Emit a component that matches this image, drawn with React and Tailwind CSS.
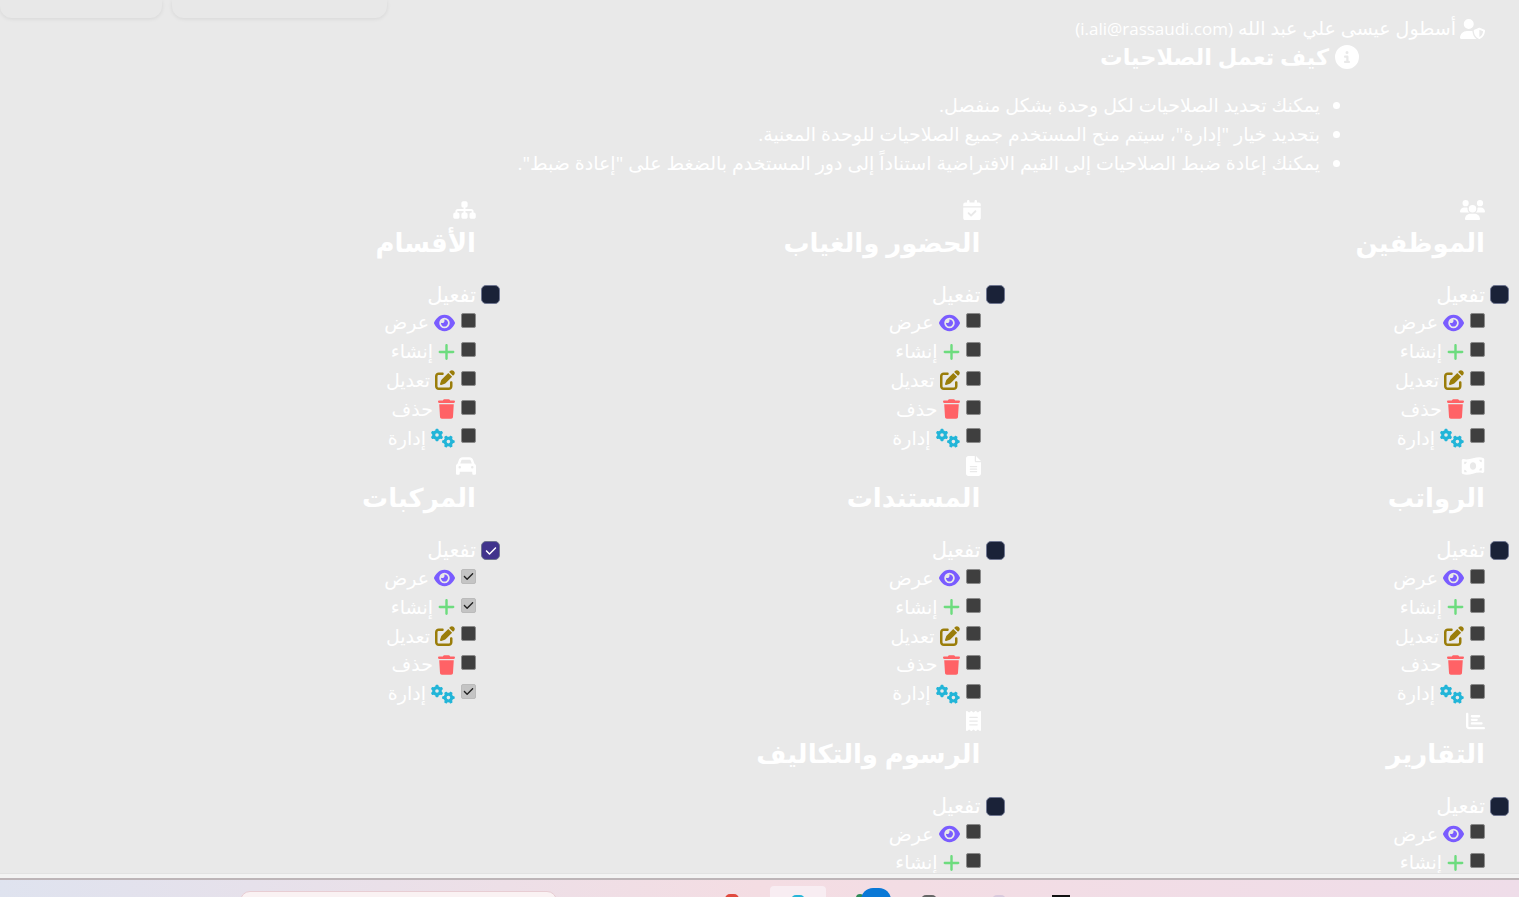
import React from 'react';
import { FaUserShield, FaCircleInfo, FaUsers, FaCalendarCheck, FaSitemap, FaMoneyBillWave, FaFileLines, FaCar, FaChartBar, FaReceipt, FaEye, FaPlus, FaPenToSquare, FaTrash, FaGears, FaCheck } from 'react-icons/fa6';

// last row runs off the bottom of the page, only two permissions are in view
const modules = [
  { name: 'الموظفين', Icon: FaUsers, size: 'w-[25px]' },
  { name: 'الحضور والغياب', Icon: FaCalendarCheck, size: 'w-[18px]' },
  { name: 'الأقسام', Icon: FaSitemap, size: 'w-[23px]' },
  { name: 'الرواتب', Icon: FaMoneyBillWave, size: 'w-[24px]' },
  { name: 'المستندات', Icon: FaFileLines, size: 'w-[15px]' },
  { name: 'المركبات', Icon: FaCar, size: 'w-[20px]', enabled: true, checked: ['view', 'create', 'manage'] },
  { name: 'التقارير', Icon: FaChartBar, size: 'w-[19px]', limit: 2 },
  { name: 'الرسوم والتكاليف', Icon: FaReceipt, size: 'w-[15px]', limit: 2 },
];

const perms = [
  { key: 'view', label: 'عرض', Icon: FaEye, size: 'w-[21px]', color: 'text-[#7a5cff]' },
  { key: 'create', label: 'إنشاء', Icon: FaPlus, size: 'w-[17px]', color: 'text-[#6ddc7e]' },
  { key: 'edit', label: 'تعديل', Icon: FaPenToSquare, size: 'w-[20px]', color: 'text-[#9a7d0a]' },
  { key: 'delete', label: 'حذف', Icon: FaTrash, size: 'w-[17px]', color: 'text-[#ff6266]' },
  { key: 'manage', label: 'إدارة', Icon: FaGears, size: 'w-[24px]', color: 'text-[#22b5d8]' },
];

const notes = [
  'يمكنك تحديد الصلاحيات لكل وحدة بشكل منفصل.',
  'بتحديد خيار "إدارة"، سيتم منح المستخدم جميع الصلاحيات للوحدة المعنية.',
  'يمكنك إعادة ضبط الصلاحيات إلى القيم الافتراضية استناداً إلى دور المستخدم بالضغط على "إعادة ضبط".',
];

const PermRow = ({ perm, checked }) => (
  <div className="flex h-[28.8px] items-center">
    <span className={`flex h-[15px] w-[15px] -translate-y-[2px] items-center justify-center rounded-[2px] border ${checked ? 'border-[#bbbbbb] bg-[#c4c4c4]' : 'border-[#8a8a8a] bg-[#3f3f3f]'}`}>
      {checked && <FaCheck className="h-[11px] w-[11px] text-[#222]" />}
    </span>
    <perm.Icon className={`mr-[6px] h-[20px] ${perm.size} ${perm.color}`} />
    <span className="mr-[5px]">{perm.label}</span>
  </div>
);

const ModuleCard = ({ mod }) => (
  <div>
    <div className="flex h-[28.8px] items-center">
      <mod.Icon className={`h-[20px] -translate-y-[1px] text-white ${mod.size}`} />
    </div>
    <h3 className="mb-[24px] h-[30px] translate-y-[1px] text-[26px] leading-[30px] font-bold text-white">{mod.name}</h3>
    <div className="flex h-[28.8px] items-center">
      <span className={`-mr-[24px] flex h-[19px] w-[19px] translate-y-[1px] items-center justify-center rounded-[5px] border border-[#6f7690] ${mod.enabled ? 'bg-[#40348c]' : 'bg-[#1a2238]'}`}>
        {mod.enabled && <FaCheck className="h-[12px] w-[12px] text-white" />}
      </span>
      <span className="mr-[5px] text-[21px]">تفعيل</span>
    </div>
    {perms.slice(0, mod.limit ?? perms.length).map((perm) => (
      <PermRow key={perm.key} perm={perm} checked={mod.checked?.includes(perm.key)} />
    ))}
  </div>
);

const App = () => {
  return (
    <div className="flex h-[897px] flex-col overflow-hidden bg-[#e9e9e9] font-['Open_Sans','DejaVu_Sans',sans-serif]">
      <div className="min-h-0 flex-1">
        {/* bottom of the cards scrolled off the top */}
        <div className="flex h-[18px] gap-[10px]">
          <div className="w-[162px] rounded-b-[12px] bg-[#e8e8e8] shadow-[0_1px_4px_rgba(0,0,0,0.08)]" />
          <div className="w-[215px] rounded-b-[12px] bg-[#e8e8e8] shadow-[0_1px_4px_rgba(0,0,0,0.08)]" />
        </div>

        <div dir="rtl" className="pr-[34px] text-[19px] leading-[28.8px] text-white">
          <div className="flex h-[25.4px] flex-col justify-end">
            <div className="flex h-[28.8px] shrink-0 items-center gap-[4px]">
              <FaUserShield className="h-[20px] w-[25px] text-white" />
              <span>
                أسطول عيسى علي عبد الله <span className="text-[17px]">(i.ali@rassaudi.com)</span>
              </span>
            </div>
          </div>

          <div className="pr-[125px]">
            <h4 className="mr-[1px] mb-[21px] flex h-[27px] items-center gap-[6px] text-[22.5px] font-bold text-white">
              <FaCircleInfo className="h-[24px] w-[24px]" />
              كيف تعمل الصلاحيات
            </h4>
            <ul className="mb-[19px] list-disc pr-10">
              {notes.map((note) => (
                <li key={note}>{note}</li>
              ))}
            </ul>
          </div>

          <div className="grid w-[1513.5px] grid-cols-3">
            {modules.map((mod) => (
              <ModuleCard key={mod.name} mod={mod} />
            ))}
          </div>
        </div>
      </div>

      {/* desktop taskbar under the browser window */}
      <div className="h-[5px] border-t border-[#e2e2e2] bg-[#f3f3f3]" />
      <div className="flex h-[19px] overflow-hidden border-t-2 border-[#bdb5b8] bg-gradient-to-r from-[#dfe3ef] via-[#f4dde3] to-[#efdde9]">
        <div className="mt-[11px] ml-[240px] h-[20px] w-[317px] rounded-t-[10px] border border-[#e8cdd3] bg-[#faf2f3]" />
        <div className="mt-[14px] ml-[168px] h-[10px] w-[14px] rounded-full bg-[#e04a3f]" />
        <div className="mt-[6px] ml-[31px] flex h-[20px] w-[56px] justify-center rounded-t-[4px] bg-[#f8edf2] pt-[9px]">
          <div className="h-[10px] w-[14px] rounded-full bg-[#27b5d8]" />
        </div>
        <div className="mt-[14px] ml-[30px] h-[10px] w-[8px] rounded-full bg-[#2e8b57]" />
        <div className="mt-[8px] -ml-[3px] h-[24px] w-[30px] rounded-full bg-[#0a78d6]" />
        <div className="mt-[15px] ml-[30px] h-[10px] w-[16px] rounded-full bg-[#666]" />
        <div className="mt-[15px] ml-[55px] h-[10px] w-[14px] rounded-full bg-[#d8c9dc]" />
        <div className="mt-[15px] ml-[46px] h-[10px] w-[18px] bg-[#111]" />
      </div>
    </div>
  );
};

export default App;
